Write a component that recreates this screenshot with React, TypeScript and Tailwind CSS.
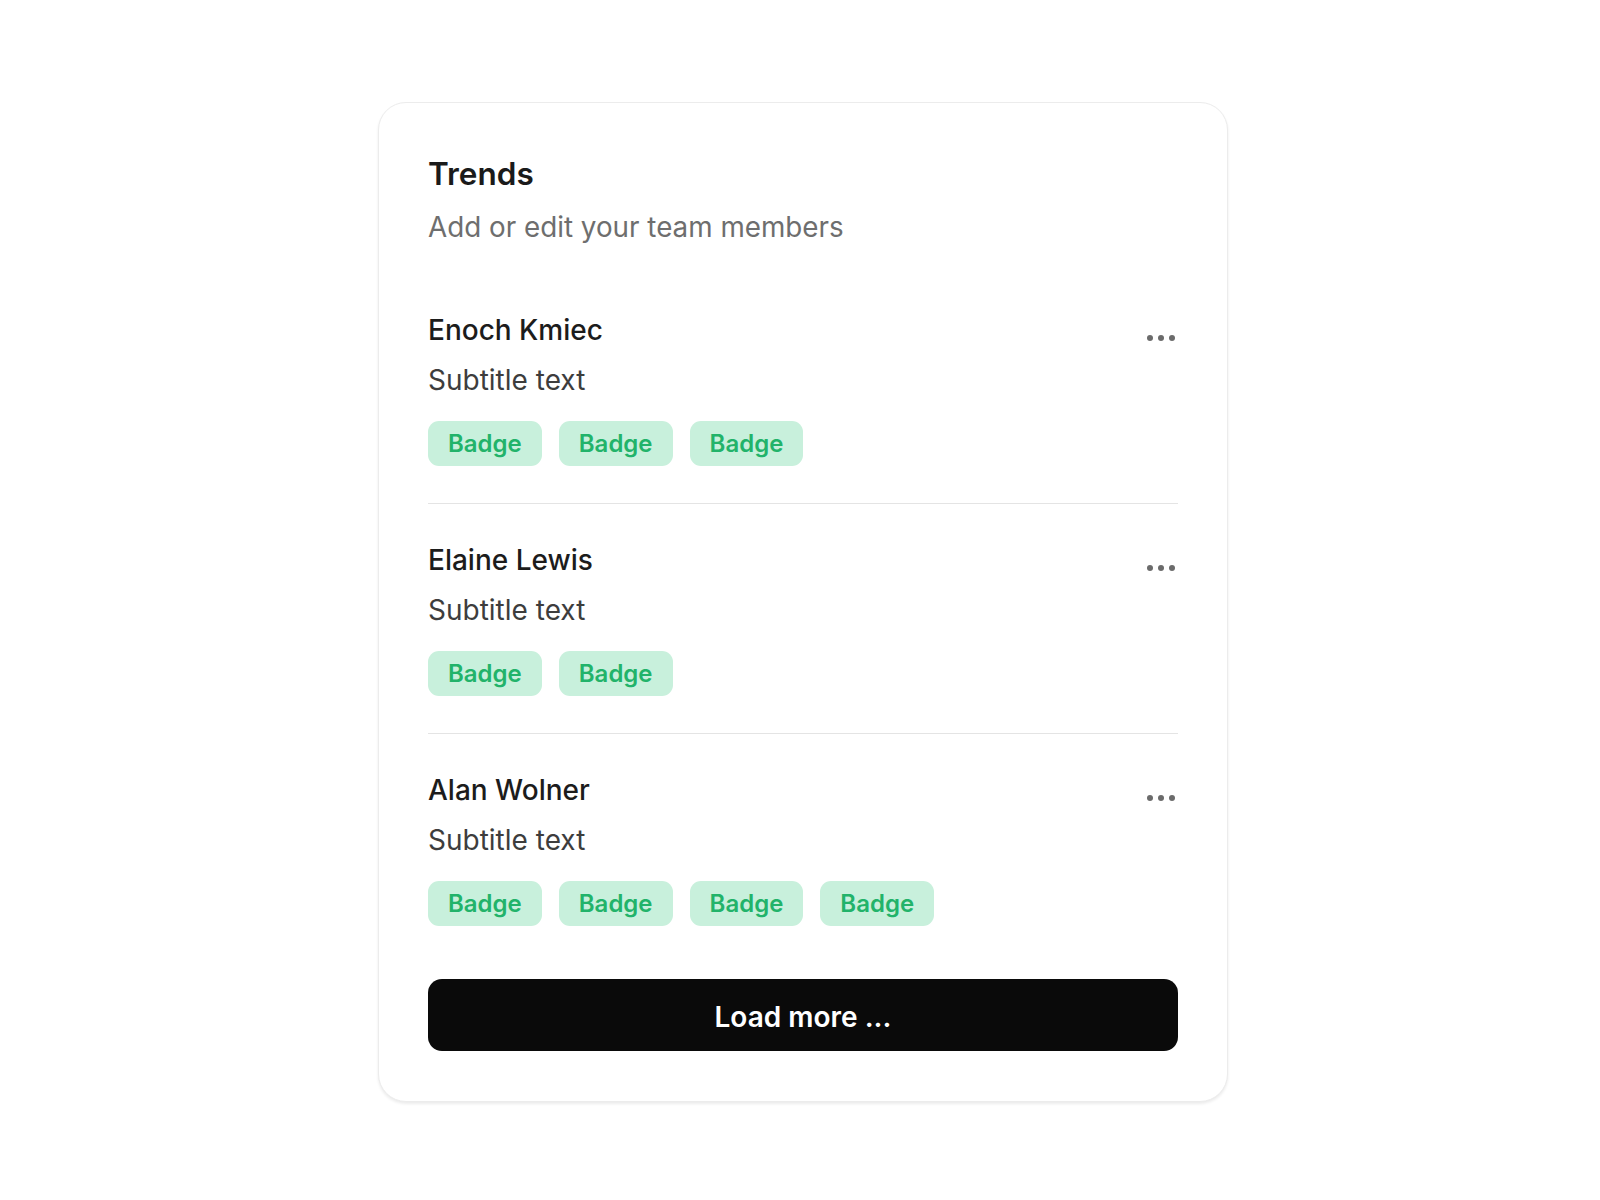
import React from 'react'

interface Member {
  name: string
  subtitle: string
  badges: string[]
}

const members: Member[] = [
  { name: 'Enoch Kmiec', subtitle: 'Subtitle text', badges: ['Badge', 'Badge', 'Badge'] },
  { name: 'Elaine Lewis', subtitle: 'Subtitle text', badges: ['Badge', 'Badge'] },
  { name: 'Alan Wolner', subtitle: 'Subtitle text', badges: ['Badge', 'Badge', 'Badge', 'Badge'] }
]

const DotsIcon = () => (
  <svg width="30" height="8" viewBox="0 0 30 8" fill="#6b6b6b">
    <circle cx="4" cy="4" r="3" />
    <circle cx="15" cy="4" r="3" />
    <circle cx="26" cy="4" r="3" />
  </svg>
)

const MemberRow: React.FC<{ member: Member; last: boolean }> = ({ member, last }) => (
  <div className={last ? 'pt-[39px]' : 'pt-[39px] pb-[37px] border-b border-[#e4e4e4]'}>
    <div className="flex items-start justify-between">
      <div>
        <div className="text-[28px] leading-[34px] font-medium text-[#1c1c1c]">{member.name}</div>
        <div className="mt-4 text-[28px] leading-[34px] text-[#3d3d3d]">{member.subtitle}</div>
      </div>
      <div className="pt-[21px] pr-[2px]">
        <DotsIcon />
      </div>
    </div>
    <div className="mt-6 flex gap-[17px]">
      {member.badges.map((b, i) => (
        <span
          key={i}
          className="h-[45px] px-5 flex items-center rounded-[11px] bg-[#c8f0dc] text-[24px] font-semibold text-[#22b36a]"
        >
          {b}
        </span>
      ))}
    </div>
  </div>
)

export default function App() {
  return (
    <div className="min-h-screen bg-white flex justify-center pl-[6px] pt-[102px] font-['Inter',sans-serif]">
      <div className="w-[850px] h-[1000px] rounded-[28px] border border-[#ececec] bg-white shadow-[0_2px_3px_rgba(0,0,0,0.08)] px-[49px] pt-[51px]">
        {/* 标题 */}
        <div className="text-[31.5px] leading-[40px] font-semibold text-[#1a1a1a]">Trends</div>
        <div className="mt-4 text-[27.8px] leading-[34px] text-[#6e6e6e]">Add or edit your team members</div>

        {/* 成员列表 */}
        <div className="mt-[30px]">
          {members.map((m, i) => (
            <MemberRow key={i} member={m} last={i === members.length - 1} />
          ))}
        </div>

        <button
          type="button"
          className="mt-[53px] w-full h-[72px] pt-1 rounded-[14px] bg-[#0a0a0a] text-white text-[28px] font-semibold"
        >
          Load more ...
        </button>
      </div>
    </div>
  )
}
